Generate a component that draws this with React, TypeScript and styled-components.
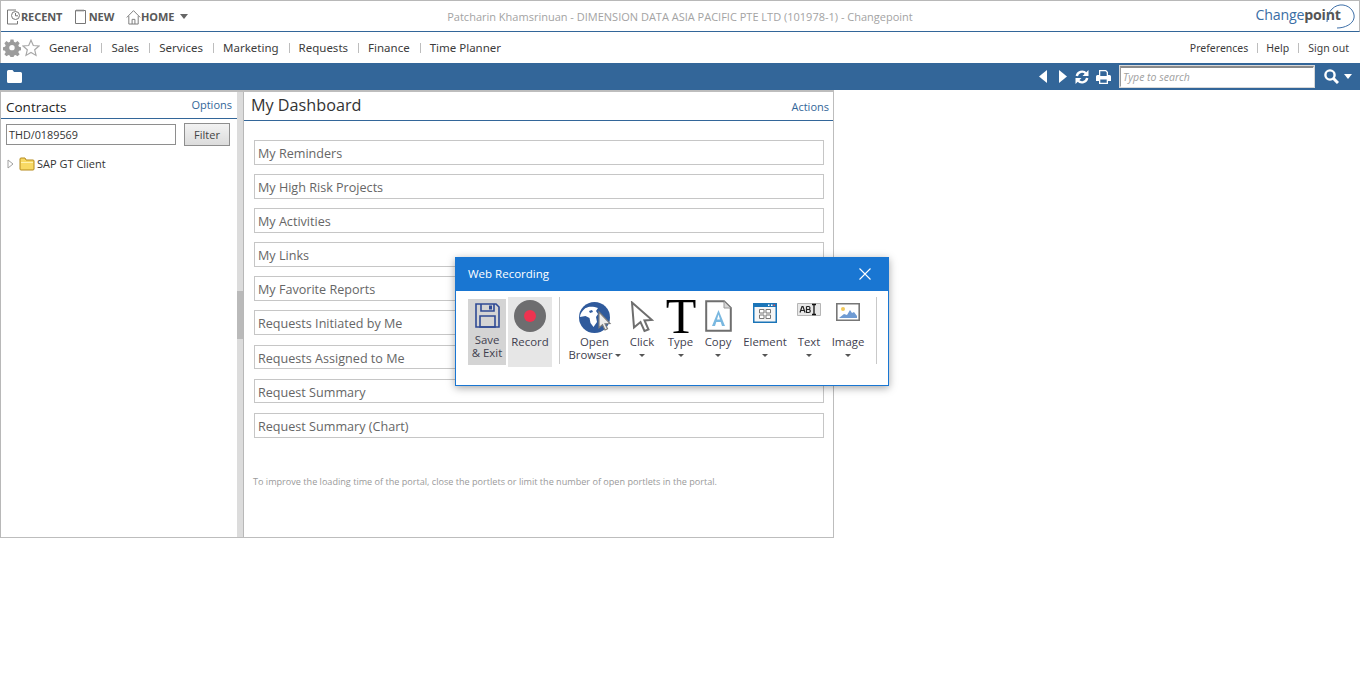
import React from "react";
import styled, { createGlobalStyle } from "styled-components";

const Global = createGlobalStyle`
  html, body { margin: 0; padding: 0; background: #fff; }
  body { font-family: "Open Sans", "Noto Sans", "Liberation Sans", sans-serif; font-size: 12px; color: #444; }
`;

const Page = styled.div`
  position: relative;
  width: 1360px;
  height: 682px;
  overflow: hidden;
  background: #fff;
`;
const Shell = styled.div`
  width: 1360px;
  border-top: 1px solid #b8b8b8;
  border-left: 1px solid #b8b8b8;
  box-sizing: border-box;
`;
const TopBar = styled.header`
  height: 30px;
  display: grid;
  grid-template-columns: 400px 1fr 400px;
  align-items: center;
  border-bottom: 1px solid #336699;
  border-right: 1px solid #b8b8b8;
`;
const QuickLinks = styled.div`
  display: flex;
  align-items: center;
  padding: 1px 0 0 5px;
`;
const QuickLink = styled.span<{ $w: number }>`
  display: flex;
  align-items: center;
  width: ${(p) => p.$w}px;
  font-family: "Noto Sans", sans-serif;
  font-size: 11px;
  font-weight: 700;
  color: #595959;
  letter-spacing: -0.1px;
`;
const Title = styled.div`
  text-align: center;
  font-size: 11px;
  color: #a3a3a3;
  white-space: nowrap;
  padding-top: 1px;
`;
const LogoWrap = styled.div`
  display: flex;
  justify-content: flex-end;
  padding-right: 3px;
`;
const NavBar = styled.nav`
  height: 31px;
  display: flex;
  align-items: center;
  justify-content: space-between;
`;
const NavLeft = styled.div`
  display: flex;
  align-items: center;
  padding-left: 2px;
`;
const NavIcons = styled.div`
  display: flex;
  align-items: center;
  gap: 1px;
  width: 46px;
`;
const NavItem = styled.span`
  font-family: "Noto Sans", sans-serif;
  font-size: 11.5px;
  color: #3c3c3c;
  white-space: nowrap;
`;
const NavSep = styled.span<{ $w?: number }>`
  width: 1px;
  height: 10px;
  background: #bdbdbd;
  margin: 1px ${(p) => p.$w ?? 9}px 0 ${(p) => p.$w ?? 10}px;
`;
const NavRight = styled.div`
  display: flex;
  align-items: center;
  padding-right: 11px;
`;
const SmallNav = styled(NavItem)`
  font-size: 10.5px;
`;
const BlueBar = styled.div`
  height: 27px;
  background: #336699;
  display: flex;
  align-items: center;
  justify-content: space-between;
  padding: 0 8px 0 7px;
  margin-left: -1px;
`;
const BarTools = styled.div`
  display: flex;
  align-items: center;
`;
const BarGap = styled.span<{ $w: number }>`
  width: ${(p) => p.$w}px;
`;
const SearchBox = styled.div`
  width: 194px;
  height: 21px;
  box-sizing: border-box;
  border: 1px solid #fff;
  border-top: 2px solid #8a8a8a;
  border-left: 1px solid #9a9a9a;
  outline: 1px solid #d8d8d8;
  background: #fff;
  margin: 0 10px 0 9px;
  padding-left: 2px;
  font-style: italic;
  font-size: 10.5px;
  line-height: 18px;
  color: #a0a0a0;
`;
const Body = styled.main`
  display: flex;
  border-top: 2px solid #bdbdbd;
  margin-left: -1px;
  border-left: 1px solid #b8b8b8;
  height: 448px;
  width: 834px;
  box-sizing: border-box;
  border-bottom: 1px solid #bdbdbd;
`;
const SidePanel = styled.aside`
  width: 236px;
  flex: none;
`;
const SideHead = styled.div`
  height: 26px;
  display: flex;
  justify-content: space-between;
  align-items: flex-start;
  padding: 0 5px;
  border-bottom: 1px solid #336699;
`;
const SideTitle = styled.span`
  font-size: 13.5px;
  color: #222;
  line-height: 17px;
  margin-top: 7px;
`;
const LinkText = styled.span`
  font-size: 11px;
  color: #336699;
  line-height: 14px;
  margin-top: 6px;
`;
const FilterRow = styled.div`
  display: flex;
  align-items: center;
  padding: 4px 7px 0 5px;
  justify-content: space-between;
`;
const FilterInput = styled.div`
  width: 170px;
  height: 21px;
  box-sizing: border-box;
  border: 1px solid #8e8e8e;
  padding-left: 2px;
  font-size: 10.8px;
  line-height: 19px;
  color: #333;
`;
const FilterBtn = styled.div`
  width: 46px;
  height: 23px;
  box-sizing: border-box;
  border: 1px solid #8e8e8e;
  background: linear-gradient(#f2f2f2, #dcdcdc);
  text-align: center;
  font-size: 11px;
  line-height: 21px;
  color: #444;
`;
const TreeRow = styled.div`
  display: flex;
  align-items: center;
  padding: 10px 0 0 6px;
  font-size: 11px;
  color: #333;
`;
const TreeFolderWrap = styled.span`
  display: flex;
  margin: 0 2px 0 5px;
`;
const Splitter = styled.div`
  width: 6px;
  flex: none;
  background: #dcdcdc;
  position: relative;
  border-right: 1px solid #b8b8b8;
`;
const SplitHandle = styled.div`
  position: absolute;
  left: 0;
  top: 199px;
  width: 6px;
  height: 48px;
  background: #bababa;
`;
const MainPanel = styled.section`
  flex: 1;
  min-width: 0;
  border-right: 1px solid #bdbdbd;
`;
const MainHead = styled.div`
  height: 28px;
  display: flex;
  justify-content: space-between;
  align-items: flex-start;
  padding: 0 4px 0 7px;
  border-bottom: 1px solid #336699;
`;
const MainTitle = styled.h1`
  margin: 2px 0 0;
  font-weight: 400;
  font-size: 16.2px;
  line-height: 23px;
  color: #333;
`;
const Actions = styled(LinkText)`
  margin-top: 8px;
`;
const Portlets = styled.div`
  padding: 19px 9px 0 10px;
  display: flex;
  flex-direction: column;
  gap: 9.3px;
`;
const Portlet = styled.div`
  height: 24.8px;
  box-sizing: border-box;
  border: 1px solid #c6c6c6;
  padding: 1px 0 0 3px;
  font-size: 12.6px;
  line-height: 23px;
  color: #666;
`;
const Note = styled.p`
  margin: 37px 0 0 9px;
  font-size: 9.1px;
  color: #9a9a9a;
  line-height: 14px;
`;
const Modal = styled.div`
  position: absolute;
  left: 455px;
  top: 257px;
  width: 434px;
  height: 129px;
  box-sizing: border-box;
  border: 1px solid #1976d2;
  background: #fff;
  box-shadow: 0 2px 8px rgba(0, 0, 0, 0.35);
`;
const ModalHead = styled.div`
  height: 33px;
  background: #1976d2;
  display: flex;
  align-items: center;
  justify-content: space-between;
  padding: 0 17px 2px 12px;
  box-sizing: border-box;
  color: #fff;
  font-size: 11.5px;
`;
const Ribbon = styled.div`
  display: flex;
  align-items: flex-start;
  padding: 6px 0 0 12px;
`;
const SaveBtn = styled.div`
  width: 38px;
  height: 66px;
  margin-top: 2px;
  background: #d4d4d4;
  display: flex;
  flex-direction: column;
  align-items: center;
  padding-top: 4px;
  box-sizing: border-box;
`;
const RecordBtn = styled.div`
  width: 44px;
  height: 70px;
  margin-left: 2px;
  background: #e6e6e6;
  display: flex;
  flex-direction: column;
  align-items: center;
  padding-top: 3px;
  box-sizing: border-box;
`;
const Divider = styled.div<{ $ml: number }>`
  width: 1px;
  height: 67px;
  background: #c9c9c9;
  margin-left: ${(p) => p.$ml}px;
`;
const Tool = styled.div<{ $w: number; $ml?: number }>`
  width: ${(p) => p.$w}px;
  margin-left: ${(p) => p.$ml ?? 0}px;
  display: flex;
  flex-direction: column;
  align-items: center;
`;
const IconSlot = styled.div<{ $pt: number }>`
  height: 38px;
  display: flex;
  align-items: flex-start;
  justify-content: center;
  padding-top: ${(p) => p.$pt}px;
  box-sizing: border-box;
`;
const ToolLabel = styled.div<{ $mt?: number }>`
  font-size: 11.4px;
  line-height: 13px;
  margin-top: ${(p) => p.$mt ?? 0}px;
  color: #3f3f4f;
  text-align: center;
  white-space: nowrap;
`;
const Caret = styled.span`
  display: block;
  width: 0;
  height: 0;
  margin-top: 6px;
  border-left: 3.5px solid transparent;
  border-right: 3.5px solid transparent;
  border-top: 3.5px solid #555;
`;
const InlineCaret = styled(Caret)`
  display: inline-block;
  margin: 0 0 2px 2px;
`;
const HomeCaret = styled.span`
  margin-left: 6px;
  width: 0;
  height: 0;
  border-left: 4px solid transparent;
  border-right: 4px solid transparent;
  border-top: 5px solid #666;
`;
const WhiteCaret = styled.span`
  margin-left: 5px;
  width: 0;
  height: 0;
  border-left: 4.5px solid transparent;
  border-right: 4.5px solid transparent;
  border-top: 5px solid #fff;
`;

const Recent = () => (
  <svg width="15" height="16" viewBox="0 0 15 16" fill="none" stroke="#777" strokeWidth="1">
    <path d="M1.5 1h8.500M1.500 1v14h10v-3" />
    <circle cx="9.500" cy="6.500" r="4" fill="#fff" />
    <path d="M9.500 4v2.800h2.500" />
  </svg>
);
const NewDoc = () => (
  <svg width="11" height="15" viewBox="0 0 11 15" fill="#fff" stroke="#777">
    <path d="M.5 1.500h10v13H.5z" />
    <path d="M2 .3v2.500M4 .3v2.500M6 .3v2.500M8 .3v2.500" stroke="#999" />
  </svg>
);
const Home = () => (
  <svg width="15" height="16" viewBox="0 0 16 16" fill="none" stroke="#777">
    <path d="M.8 8.500 8 1.200l7.200 7.300M3 7v8.500h10V7M6.500 15.500v-5h3v5" />
  </svg>
);
const Gear = () => (
  <svg width="18" height="18" viewBox="0 0 24 24" fill="#9c9c9c">
    <path d="M10 1h4l.6 3.100 2.100.9 2.700-1.800 2.800 2.800-1.800 2.700.9 2.100 3 .6v4l-3 .6-.9 2.100 1.800 2.700-2.800 2.800-2.700-1.800-2.100.9-.6 3h-4l-.6-3-2.100-.9-2.700 1.800-2.800-2.800 1.800-2.700-.9-2.100-3-.6v-4l3-.6.9-2.100-1.800-2.700 2.800-2.800 2.700 1.800 2.100-.9z" transform="translate(0 -.5)" />
    <circle cx="12" cy="11.500" r="3.600" fill="#fff" />
  </svg>
);
const Star = () => (
  <svg width="18" height="18" viewBox="0 0 18 18" fill="#fff" stroke="#a8a8a8" strokeWidth="1.200">
    <path d="M9 1.200l2.300 5.300 5.700.5-4.300 3.800 1.300 5.600L9 13.500l-5 2.900 1.300-5.600L1 7l5.700-.5z" />
  </svg>
);
const Folder = () => (
  <svg width="15" height="13" viewBox="0 0 15 13" fill="#fff">
    <path d="M1.500 0h4l1.500 2h6.500A1.500 1.500 0 0 1 15 3.500v8a1.500 1.500 0 0 1-1.500 1.500h-12A1.500 1.500 0 0 1 0 11.500v-10A1.500 1.500 0 0 1 1.500 0z" />
  </svg>
);
const BarBack = () => (
  <svg width="9" height="13" viewBox="0 0 9 13" fill="#fff"><path d="M8 0v13L0 6.500z" /></svg>
);
const BarFwd = () => (
  <svg width="9" height="13" viewBox="0 0 9 13" fill="#fff"><path d="M1 0v13l8-6.500z" /></svg>
);
const Refresh = () => (
  <svg width="14" height="14" viewBox="0 0 14 14" fill="none" stroke="#fff" strokeWidth="2.400">
    <path d="M1.800 6a5.300 5.300 0 0 1 9.200-2.500M12.200 8a5.300 5.300 0 0 1-9.200 2.500" />
    <path d="M13.500 0v6h-6z" fill="#fff" stroke="none" />
    <path d="M.5 14V8h6z" fill="#fff" stroke="none" />
  </svg>
);
const Printer = () => (
  <svg width="15" height="14" viewBox="0 0 15 14" fill="#fff">
    <path fillRule="evenodd" d="M3 0h7l2 2v3h1.500A1.500 1.500 0 0 1 15 6.500V11h-3v3H3v-3H0V6.500A1.500 1.500 0 0 1 1.500 5H3zm1.300 1.300V6h6.400V2.500L9.500 1.300zM4.300 9.500v3.200h6.400V9.500z" />
  </svg>
);
const Search = () => (
  <svg width="15" height="15" viewBox="0 0 15 15" fill="none" stroke="#fff" strokeWidth="2.400">
    <circle cx="6" cy="6" r="4.600" />
    <path d="M9.500 9.500 14 14" strokeWidth="3" />
  </svg>
);
const TreeArrow = () => (
  <svg width="7" height="10" viewBox="0 0 7 10" fill="#fff" stroke="#a0a0a0"><path d="M1 1v8l5-4z" /></svg>
);
const TreeFolder = () => (
  <svg width="16" height="14" viewBox="0 0 16 14">
    <path d="M1 3V2a1 1 0 0 1 1-1h4l1 2h7a1 1 0 0 1 1 1v8a1 1 0 0 1-1 1H2a1 1 0 0 1-1-1z" fill="#f8d964" stroke="#b58a1d" />
    <path d="M2 5h12v1H2z" fill="#fff2b0" />
  </svg>
);
const Logo = () => (
  <svg width="100" height="30" viewBox="0 0 100 30">
    <text x="-0.500" y="19" fontFamily="Open Sans, sans-serif" fontSize="14.2" fill="#3a6ea5" letterSpacing="-0.2">Change<tspan fontWeight="700" fill="#555">point</tspan></text>
    <path d="M71 21C71 10 79 3 87 4c8 1 12 8 11 13-1 6-9 10-17 10" fill="none" stroke="#3d6fa8" strokeWidth="1" />
  </svg>
);
const Close = () => (
  <svg width="12" height="12" viewBox="0 0 12 12" stroke="#fff" strokeWidth="1.100"><path d="M.5.500l11 11M11.500.500l-11 11" /></svg>
);
const Floppy = () => (
  <svg width="25" height="25" viewBox="0 0 25 25" fill="none" stroke="#2f4a94" strokeWidth="1.600">
    <path d="M1 1h20l3 3v20H1z" />
    <path d="M6 1v7h13V1" />
    <path d="M14 2.500h3v4h-3z" fill="#2f4a94" stroke="none" />
    <path d="M5 13h15v11H5z" />
  </svg>
);
const RecordIcon = () => (
  <svg width="32" height="32" viewBox="0 0 32 32">
    <circle cx="16" cy="16" r="16" fill="#6d6d6f" />
    <circle cx="16" cy="16" r="6" fill="#ee3350" />
  </svg>
);
const Globe = () => (
  <svg width="31" height="32" viewBox="0 0 31 32" overflow="visible">
    <circle cx="15.500" cy="15.500" r="15.500" fill="#2f5a9c" />
    <path d="M7 6C10 4 15 4.500 19 6l-2 3 2 3-2 3 1 5-3.500 5-3-4-1-5-4-2-5.500 1c0-3 2-6 5.500-9z" fill="#fff" />
    <path d="M10 9l3-1 1 2-3 1z" fill="#2f5a9c" />
    <path d="M20 10l11 11.500-5 .3 2.500 5-2.500 1.200-2.500-5.200-3.500 3z" fill="#ececec" stroke="#7d7d7d" strokeWidth="1.200" />
  </svg>
);
const Cursor = () => (
  <svg width="24" height="32" viewBox="0 0 24 32" fill="#fff" stroke="#6e6e6e" strokeWidth="2">
    <path d="M2 1.500 22 19l-7.500.5 4 9-4 1.500-4-9-6.500 5.500z" />
  </svg>
);
const TypeIcon = () => (
  <svg width="30" height="35" viewBox="0 0 30 35" overflow="visible">
    <text x="15" y="33" textAnchor="middle" fontFamily="Liberation Serif, serif" fontSize="50" fill="#000">T</text>
  </svg>
);
const CopyIcon = () => (
  <svg width="27" height="32" viewBox="0 0 27 32" fill="#fff">
    <path d="M1.200 1.200H19L25.800 8v22.800H1.200z" stroke="#6e6e6e" strokeWidth="2" />
    <path d="M19 1.500V8h6.500" fill="#d8d8d8" stroke="#9a9a9a" />
    <path d="M13.500 10 7 26h3l1.300-4h4.400l1.300 4h3zM12 19.500l1.500-5 1.500 5z" fill="#7ab8e0" />
  </svg>
);
const ElementIcon = () => (
  <svg width="24" height="20" viewBox="0 0 24 20">
    <path d="M0 0h24v20H0z" fill="#1b75b8" />
    <path d="M1.500 4h21v14.500h-21z" fill="#f6f6f6" />
    <path d="M6.500 6.500h4.500V10H6.500zM13 6.500h4.500V10H13zM6.500 12h4.500v3.500H6.500zM13 12h4.500v3.500H13z" fill="#fff" stroke="#777" />
    <path d="M15 1.500h1.500V3H15zM18 1.500h1.500V3H18z" fill="#fff" />
    <path d="M20.500 1.500H22V3h-1.500z" fill="#e25050" />
  </svg>
);
const TextIcon = () => (
  <svg width="24" height="13" viewBox="0 0 24 13">
    <path d="M.5.500h23v12H.5z" fill="#e8e8e8" stroke="#b5b5b5" />
    <path d="M3 9.500 5 3.500h1L8 9.500M4 7.500h3M9.500 3.500v6h2.300a1.500 1.500 0 0 0 0-3H9.500M9.500 3.500h2a1.500 1.500 0 0 1 0 3" fill="none" stroke="#222" strokeWidth="1.200" />
    <path d="M15 1.500h4M15 11.500h4M17 1.500v10" fill="none" stroke="#111" strokeWidth="1.300" />
  </svg>
);
const ImageIcon = () => (
  <svg width="24" height="18" viewBox="0 0 24 18">
    <path d="M.8.800h22.400v16.400H.8z" fill="#fff" stroke="#777" strokeWidth="1.600" />
    <circle cx="7" cy="6" r="2" fill="#f1c85a" />
    <path d="M3 15l5-4 3 1 3-5 2 3 2-1 3 4v2H3z" fill="#6f9bd3" />
  </svg>
);

const portlets = [
  "My Reminders",
  "My High Risk Projects",
  "My Activities",
  "My Links",
  "My Favorite Reports",
  "Requests Initiated by Me",
  "Requests Assigned to Me",
  "Request Summary",
  "Request Summary (Chart)",
];
const nav = ["General", "Sales", "Services", "Marketing", "Requests", "Finance", "Time Planner"];

export default function App() {
  return (
    <Page>
      <Global />
      <Shell>
        <TopBar>
          <QuickLinks>
            <QuickLink $w={69}><Recent />RECENT</QuickLink>
            <QuickLink $w={51}><NewDoc />&nbsp;NEW</QuickLink>
            <QuickLink $w={80}><Home />HOME<HomeCaret /></QuickLink>
          </QuickLinks>
          <Title>Patcharin Khamsrinuan - DIMENSION DATA ASIA PACIFIC PTE LTD (101978-1) - Changepoint</Title>
          <LogoWrap><Logo /></LogoWrap>
        </TopBar>
        <NavBar>
          <NavLeft>
            <NavIcons><Gear /><Star /></NavIcons>
            {nav.map((n, i) => (
              <React.Fragment key={n}>
                {i > 0 && <NavSep />}
                <NavItem>{n}</NavItem>
              </React.Fragment>
            ))}
          </NavLeft>
          <NavRight>
            <SmallNav>Preferences</SmallNav>
            <NavSep $w={8.5} />
            <SmallNav>Help</SmallNav>
            <NavSep $w={9} />
            <SmallNav>Sign out</SmallNav>
          </NavRight>
        </NavBar>
        <BlueBar>
          <Folder />
          <BarTools>
            <BarBack />
            <BarGap $w={10} />
            <BarFwd />
            <BarGap $w={8} />
            <Refresh />
            <BarGap $w={7} />
            <Printer />
            <SearchBox>Type to search</SearchBox>
            <Search />
            <WhiteCaret />
          </BarTools>
        </BlueBar>
        <Body>
          <SidePanel>
            <SideHead>
              <SideTitle>Contracts</SideTitle>
              <LinkText>Options</LinkText>
            </SideHead>
            <FilterRow>
              <FilterInput>THD/0189569</FilterInput>
              <FilterBtn>Filter</FilterBtn>
            </FilterRow>
            <TreeRow>
              <TreeArrow />
              <TreeFolderWrap><TreeFolder /></TreeFolderWrap>
              SAP GT Client
            </TreeRow>
          </SidePanel>
          <Splitter><SplitHandle /></Splitter>
          <MainPanel>
            <MainHead>
              <MainTitle>My Dashboard</MainTitle>
              <Actions>Actions</Actions>
            </MainHead>
            <Portlets>
              {portlets.map((p) => <Portlet key={p}>{p}</Portlet>)}
            </Portlets>
            <Note>To improve the loading time of the portal, close the portlets or limit the number of open portlets in the portal.</Note>
          </MainPanel>
        </Body>
      </Shell>
      <Modal>
        <ModalHead>Web Recording<Close /></ModalHead>
        <Ribbon>
          <SaveBtn><Floppy /><ToolLabel $mt={5}>Save<br />&amp; Exit</ToolLabel></SaveBtn>
          <RecordBtn><RecordIcon /><ToolLabel $mt={3}>Record</ToolLabel></RecordBtn>
          <Divider $ml={7} />
          <Tool $w={61} $ml={4}><IconSlot $pt={5}><Globe /></IconSlot><ToolLabel>Open<br />Browser<InlineCaret /></ToolLabel></Tool>
          <Tool $w={34}><IconSlot $pt={4}><Cursor /></IconSlot><ToolLabel>Click</ToolLabel><Caret /></Tool>
          <Tool $w={43}><IconSlot $pt={3}><TypeIcon /></IconSlot><ToolLabel>Type</ToolLabel><Caret /></Tool>
          <Tool $w={32}><IconSlot $pt={3}><CopyIcon /></IconSlot><ToolLabel>Copy</ToolLabel><Caret /></Tool>
          <Tool $w={62}><IconSlot $pt={6}><ElementIcon /></IconSlot><ToolLabel>Element</ToolLabel><Caret /></Tool>
          <Tool $w={26}><IconSlot $pt={6}><TextIcon /></IconSlot><ToolLabel>Text</ToolLabel><Caret /></Tool>
          <Tool $w={52}><IconSlot $pt={6}><ImageIcon /></IconSlot><ToolLabel>Image</ToolLabel><Caret /></Tool>
          <Divider $ml={2} />
        </Ribbon>
      </Modal>
    </Page>
  );
}
